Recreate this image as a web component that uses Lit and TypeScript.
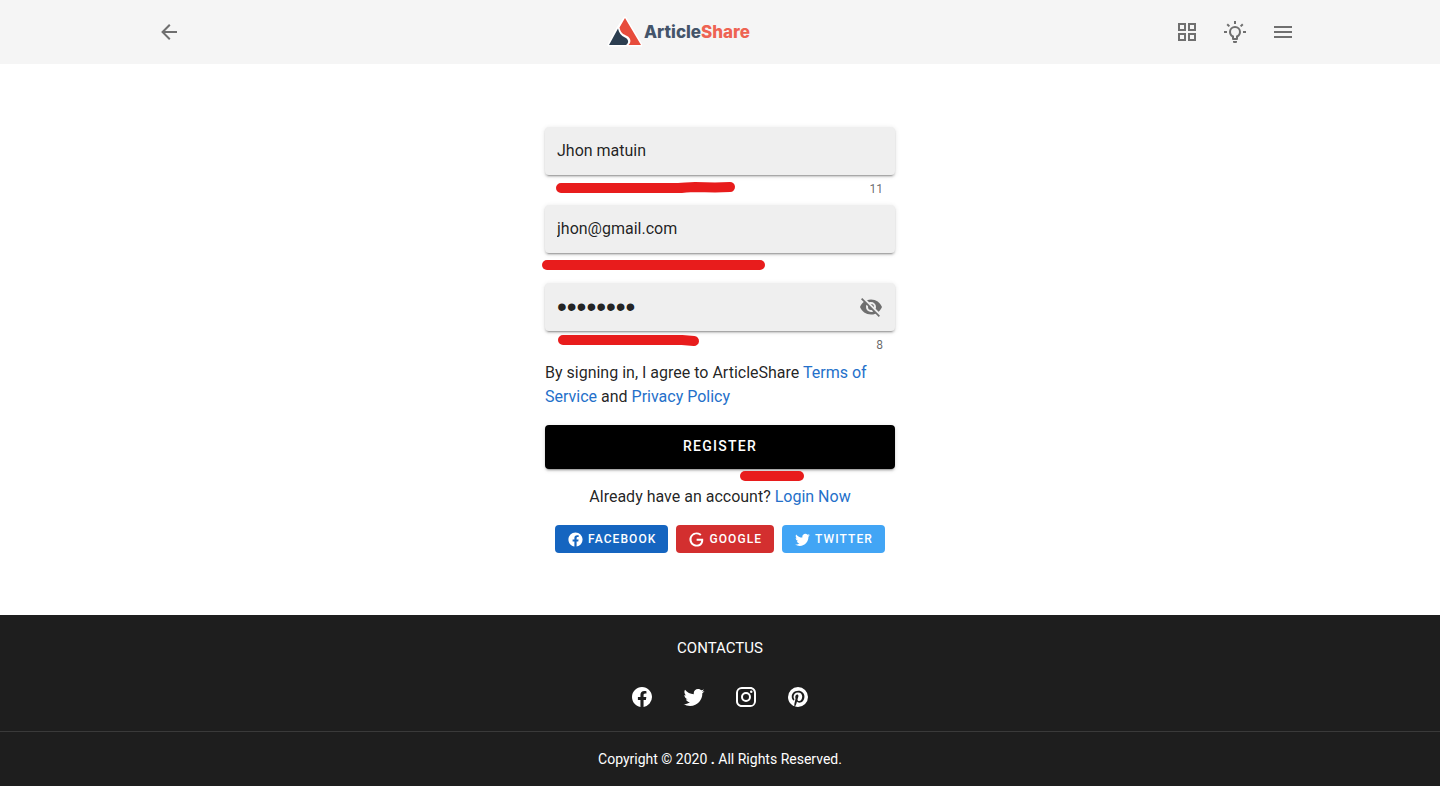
import { LitElement, html, css } from "lit";
import { customElement, property, state } from "lit/decorators.js";

const ICONS: Record<string, string> = {
  back: "M20,11V13H8L13.5,18.5L12.08,19.92L4.16,12L12.08,4.08L13.5,5.5L8,11H20Z",
  grid: "M3 11H11V3H3M5 5H9V9H5M13 21H21V13H13M15 15H19V19H15M3 21H11V13H3M5 15H9V19H5M13 3V11H21V3M19 9H15V5H19Z",
  bulb: "M20,11H23V13H20V11M1,11H4V13H1V11M13,1V4H11V1H13M4.92,3.5L7.05,5.64L5.63,7.05L3.5,4.93L4.92,3.5M16.95,5.63L19.07,3.5L20.5,4.93L18.37,7.05L16.95,5.63M12,6A6,6 0 0,1 18,12C18,14.22 16.79,16.16 15,17.2V19A1,1 0 0,1 14,20H10A1,1 0 0,1 9,19V17.2C7.21,16.16 6,14.22 6,12A6,6 0 0,1 12,6M14,21V22A1,1 0 0,1 13,23H11A1,1 0 0,1 10,22V21H14M11,18H13V15.87C14.73,15.43 16,13.86 16,12A4,4 0 0,0 12,8A4,4 0 0,0 8,12C8,13.86 9.27,15.43 11,15.87V18Z",
  menu: "M3,6H21V8H3V6M3,11H21V13H3V11M3,16H21V18H3V16Z",
  eyeOff: "M11.83,9L15,12.16C15,12.11 15,12.05 15,12A3,3 0 0,0 12,9C11.94,9 11.89,9 11.83,9M7.53,9.8L9.08,11.35C9.03,11.56 9,11.77 9,12A3,3 0 0,0 12,15C12.22,15 12.44,14.97 12.65,14.92L14.2,16.47C13.53,16.8 12.79,17 12,17A5,5 0 0,1 7,12C7,11.21 7.2,10.47 7.53,9.8M2,4.27L4.28,6.55L4.73,7C3.08,8.3 1.78,10 1,12C2.73,16.39 7,19.5 12,19.5C13.55,19.5 15.03,19.2 16.38,18.66L16.81,19.08L19.73,22L21,20.73L3.27,3M12,7A5,5 0 0,1 17,12C17,12.64 16.87,13.26 16.64,13.82L19.57,16.75C21.07,15.5 22.27,13.86 23,12C21.27,7.61 17,4.5 12,4.5C10.6,4.5 9.26,4.75 8,5.2L10.17,7.35C10.74,7.13 11.35,7 12,7Z",
  facebook: "M12 2.04C6.5 2.04 2 6.53 2 12.06C2 17.06 5.66 21.21 10.44 21.96V14.96H7.9V12.06H10.44V9.85C10.44 7.34 11.93 5.96 14.22 5.96C15.31 5.96 16.45 6.15 16.45 6.15V8.62H15.19C13.95 8.62 13.56 9.39 13.56 10.18V12.06H16.34L15.89 14.96H13.56V21.96A10 10 0 0 0 22 12.06C22 6.53 17.5 2.04 12 2.04Z",
  google: "M21.35,11.1H12.18V13.83H18.69C18.36,17.64 15.19,19.27 12.19,19.27C8.36,19.27 5,16.25 5,12C5,7.9 8.2,4.73 12.2,4.73C15.29,4.73 17.1,6.7 17.1,6.7L19,4.72C19,4.72 16.56,2 12.1,2C6.42,2 2.03,6.8 2.03,12C2.03,17.05 6.16,22 12.25,22C17.6,22 21.5,18.33 21.5,12.91C21.5,11.76 21.35,11.1 21.35,11.1V11.1Z",
  twitter: "M22.46,6C21.69,6.35 20.86,6.58 20,6.69C20.88,6.16 21.56,5.32 21.88,4.31C21.05,4.81 20.13,5.16 19.16,5.36C18.37,4.5 17.26,4 16,4C13.65,4 11.73,5.92 11.73,8.29C11.73,8.63 11.77,8.96 11.84,9.27C8.28,9.09 5.11,7.38 3,4.79C2.63,5.42 2.42,6.16 2.42,6.94C2.42,8.43 3.17,9.75 4.33,10.5C3.62,10.5 2.96,10.3 2.38,10C2.38,10 2.38,10 2.38,10.03C2.38,12.11 3.86,13.85 5.82,14.24C5.46,14.34 5.08,14.39 4.69,14.39C4.42,14.39 4.15,14.36 3.89,14.31C4.43,16 6,17.26 7.89,17.29C6.43,18.45 4.58,19.13 2.56,19.13C2.22,19.13 1.88,19.11 1.54,19.07C3.44,20.29 5.7,21 8.12,21C16,21 20.33,14.46 20.33,8.79C20.33,8.6 20.33,8.42 20.32,8.23C21.16,7.63 21.88,6.87 22.46,6Z",
  instagram: "M7.8,2H16.2C19.4,2 22,4.6 22,7.8V16.2A5.8,5.8 0 0,1 16.2,22H7.8C4.6,22 2,19.4 2,16.2V7.8A5.8,5.8 0 0,1 7.8,2M7.6,4A3.6,3.6 0 0,0 4,7.6V16.4C4,18.39 5.61,20 7.6,20H16.4A3.6,3.6 0 0,0 20,16.4V7.6C20,5.61 18.39,4 16.4,4H7.6M17.25,5.5A1.25,1.25 0 0,1 18.5,6.75A1.25,1.25 0 0,1 17.25,8A1.25,1.25 0 0,1 16,6.75A1.25,1.25 0 0,1 17.25,5.5M12,7A5,5 0 0,1 17,12A5,5 0 0,1 12,17A5,5 0 0,1 7,12A5,5 0 0,1 12,7M12,9A3,3 0 0,0 9,12A3,3 0 0,0 12,15A3,3 0 0,0 15,12A3,3 0 0,0 12,9Z",
  pinterest: "M9.04,21.54C10,21.83 10.97,22 12,22A10,10 0 0,0 22,12A10,10 0 0,0 12,2A10,10 0 0,0 2,12C2,16.25 4.67,19.9 8.44,21.34C8.35,20.56 8.26,19.27 8.44,18.38L9.59,13.44C9.59,13.44 9.3,12.86 9.3,11.94C9.3,10.56 10.16,9.53 11.14,9.53C12,9.53 12.4,10.16 12.4,10.97C12.4,11.83 11.83,13.06 11.54,14.24C11.37,15.22 12.06,16.08 13.06,16.08C14.84,16.08 16.22,14.18 16.22,11.5C16.22,9.1 14.5,7.46 12.03,7.46C9.21,7.46 7.55,9.56 7.55,11.77C7.55,12.63 7.83,13.5 8.29,14.07C8.38,14.13 8.38,14.21 8.35,14.36L8.06,15.45C8.06,15.62 7.95,15.68 7.78,15.56C6.5,15 5.76,13.18 5.76,11.71C5.76,8.55 8,5.68 12.32,5.68C15.76,5.68 18.44,8.15 18.44,11.43C18.44,14.87 16.31,17.63 13.26,17.63C12.29,17.63 11.34,17.11 11,16.5L10.33,18.87C10.1,19.73 9.47,20.88 9.04,21.5V21.54Z",
};

@customElement("app-icon")
class AppIcon extends LitElement {
  @property() name = "menu";

  static styles = css`
    :host {
      display: block;
      flex: none;
      width: 24px;
      height: 24px;
    }
    .glyph {
      display: block;
      width: 100%;
      height: 100%;
      fill: currentColor;
    }
  `;

  render() {
    return html`<svg class="glyph" viewBox="0 0 24 24" aria-hidden="true"><path d=${ICONS[this.name]}></path></svg>`;
  }
}

@customElement("app-root")
class AppRoot extends LitElement {
  @state() userName = "Jhon matuin";
  @state() email = "jhon@gmail.com";
  @state() password = "password";
  @state() reveal = false;

  static styles = css`
    :host {
      display: flex;
      flex-direction: column;
      min-height: 100vh;
      background: #fff;
      color: rgba(0, 0, 0, 0.87);
      font-family: Roboto, "Liberation Sans", sans-serif;
      font-size: 16px;
      line-height: 24px;
    }
    *,
    *::before {
      box-sizing: border-box;
    }
    button {
      border: 0;
      padding: 0;
      background: none;
      font: inherit;
      color: inherit;
      cursor: pointer;
    }
    a {
      color: #2470ca;
      text-decoration: none;
    }
    .bar {
      background: #f5f5f5;
    }
    .bar-inner {
      display: flex;
      align-items: center;
      justify-content: space-between;
      max-width: 1186px;
      height: 64px;
      margin: 0 auto;
      padding: 0 6px 0 18px;
      color: #6f6f6f;
    }
    .tools {
      display: flex;
    }
    .icon-button {
      display: grid;
      place-items: center;
      width: 48px;
      height: 48px;
    }
    .logo {
      display: flex;
      align-items: center;
      gap: 2px;
      color: #44546a;
      font-family: Inter, sans-serif;
      font-size: 17px;
      font-weight: 800;
    }
    .logo-mark {
      display: block;
      width: 36px;
      height: 32px;
    }
    .logo-accent {
      color: #ee6352;
    }
    .main {
      flex: 1;
      padding: 63px 16px 62px;
    }
    .form {
      position: relative;
      display: flex;
      flex-direction: column;
      max-width: 350px;
      margin: 0 auto;
    }
    .field {
      display: flex;
      align-items: center;
      height: 48px;
      padding: 0 12px;
      border-radius: 4px;
      background: #efefef;
      box-shadow: 0 3px 1px -2px rgba(0, 0, 0, 0.2), 0 2px 2px 0 rgba(0, 0, 0, 0.14), 0 1px 5px 0 rgba(0, 0, 0, 0.12);
    }
    .input {
      flex: 1;
      min-width: 0;
      height: 32px;
      padding: 0 0 2px;
      border: 0;
      outline: 0;
      background: none;
      font: inherit;
      color: inherit;
    }
    .masked {
      padding: 0;
      font-family: "Liberation Sans", sans-serif;
      font-size: 28px;
    }
    .toggle {
      color: #6f6f6f;
    }
    .count {
      height: 30px;
      padding: 7px 12px 0;
      color: rgba(0, 0, 0, 0.6);
      font-size: 12px;
      line-height: 14px;
      text-align: right;
    }
    .terms {
      margin: 0 0 16px;
    }
    .register {
      height: 44px;
      padding-bottom: 2px;
      border-radius: 4px;
      background: #000;
      color: #fff;
      font-size: 14px;
      font-weight: 500;
      letter-spacing: 0.09em;
      box-shadow: 0 3px 1px -2px rgba(0, 0, 0, 0.2), 0 2px 2px 0 rgba(0, 0, 0, 0.14), 0 1px 5px 0 rgba(0, 0, 0, 0.12);
    }
    .login {
      margin: 16px 0;
      text-align: center;
    }
    .social {
      display: flex;
      justify-content: center;
      gap: 8px;
    }
    .social-button {
      display: flex;
      align-items: center;
      gap: 4px;
      height: 28px;
      padding: 0 12px;
      border-radius: 4px;
      color: #fff;
      font-size: 12px;
      font-weight: 500;
      letter-spacing: 0.09em;
    }
    .social-button app-icon {
      width: 17px;
      height: 17px;
    }
    .facebook {
      background: #1565c0;
    }
    .google {
      background: #d32f2f;
    }
    .twitter {
      background: #42a5f5;
    }
    .marks {
      position: absolute;
      top: 0;
      left: 0;
      width: 350px;
      height: 426px;
      overflow: visible;
      pointer-events: none;
      fill: none;
      stroke: #e81c1c;
      stroke-width: 10;
      stroke-linecap: round;
      stroke-linejoin: round;
    }
    .footer {
      background: #1e1e1e;
      color: #fff;
      text-align: center;
    }
    .contact {
      padding: 21px 16px 22px;
    }
    .contact-title {
      margin: 0 0 25px;
      font-size: 15px;
      font-weight: 400;
      line-height: 24px;
    }
    .links {
      display: flex;
      justify-content: center;
      gap: 28px;
    }
    .links a {
      color: #fff;
    }
    .copyright {
      margin: 0;
      padding: 15px 16px;
      border-top: 1px solid #3a3a3a;
      font-size: 14px;
      line-height: 24px;
    }
  `;

  render() {
    return html`
      <header class="bar">
        <div class="bar-inner">
          <button class="icon-button" aria-label="Back"><app-icon name="back"></app-icon></button>
          <a class="logo" href="#">
            <svg class="logo-mark" viewBox="0 0 36 32" aria-hidden="true">
              <path fill="#fff" stroke="#fff" stroke-width="3" stroke-linejoin="round" d="M19 2L35 29H3L12 12Z"></path>
              <path fill="#e74c3c" d="M19 2L35 29H22.5C25.5 26.5 25 22 21 20C17 18 14.500 17 13.500 11.500Z"></path>
              <path fill="#2c3e50" d="M12 12.500C13 17 15 19.500 19 21.500C23 23.500 23 27 20 29H3Z"></path>
            </svg>
            <span>Article<span class="logo-accent">Share</span></span>
          </a>
          <nav class="tools">
            <button class="icon-button" aria-label="Categories"><app-icon name="grid"></app-icon></button>
            <button class="icon-button" aria-label="Theme"><app-icon name="bulb"></app-icon></button>
            <button class="icon-button" aria-label="Menu"><app-icon name="menu"></app-icon></button>
          </nav>
        </div>
      </header>

      <main class="main">
        <form class="form" @submit=${(e: Event) => e.preventDefault()}>
          <label class="field" for="name">
            <input class="input" id="name" type="text" aria-label="Name" .value=${this.userName}
              @input=${(e: any) => (this.userName = e.target.value)} />
          </label>
          <div class="count">${this.userName.length}</div>

          <label class="field" for="email">
            <input class="input" id="email" type="email" aria-label="Email" .value=${this.email}
              @input=${(e: any) => (this.email = e.target.value)} />
          </label>
          <div class="count"></div>

          <label class="field" for="password">
            <input class="input ${this.reveal ? "" : "masked"}" id="password" aria-label="Password"
              type=${this.reveal ? "text" : "password"} .value=${this.password}
              @input=${(e: any) => (this.password = e.target.value)} />
            <button class="toggle" type="button" aria-label="Show password"
              @click=${() => (this.reveal = !this.reveal)}><app-icon name="eyeOff"></app-icon></button>
          </label>
          <div class="count">${this.password.length}</div>

          <p class="terms">By signing in, I agree to ArticleShare <a href="#">Terms of Service</a> and <a href="#">Privacy Policy</a></p>
          <button class="register" type="submit">REGISTER</button>
          <p class="login">Already have an account? <a href="#">Login Now</a></p>
          <div class="social">
            <button class="social-button facebook" type="button"><app-icon name="facebook"></app-icon>FACEBOOK</button>
            <button class="social-button google" type="button"><app-icon name="google"></app-icon>GOOGLE</button>
            <button class="social-button twitter" type="button"><app-icon name="twitter"></app-icon>TWITTER</button>
          </div>

          <svg class="marks" viewBox="0 0 350 426" aria-hidden="true">
            <path d="M16 61H133C140 61 142 60 150 60L170 60.500L185 60"></path>
            <path d="M2 138H215"></path>
            <path d="M18 213H137L149 214"></path>
            <path d="M200 349H254"></path>
          </svg>
        </form>
      </main>

      <footer class="footer">
        <div class="contact">
          <h2 class="contact-title">CONTACTUS</h2>
          <nav class="links">
            <a href="#" aria-label="Facebook"><app-icon name="facebook"></app-icon></a>
            <a href="#" aria-label="Twitter"><app-icon name="twitter"></app-icon></a>
            <a href="#" aria-label="Instagram"><app-icon name="instagram"></app-icon></a>
            <a href="#" aria-label="Pinterest"><app-icon name="pinterest"></app-icon></a>
          </nav>
        </div>
        <p class="copyright">Copyright © 2020 <strong>.</strong> All Rights Reserved.</p>
      </footer>
    `;
  }
}
